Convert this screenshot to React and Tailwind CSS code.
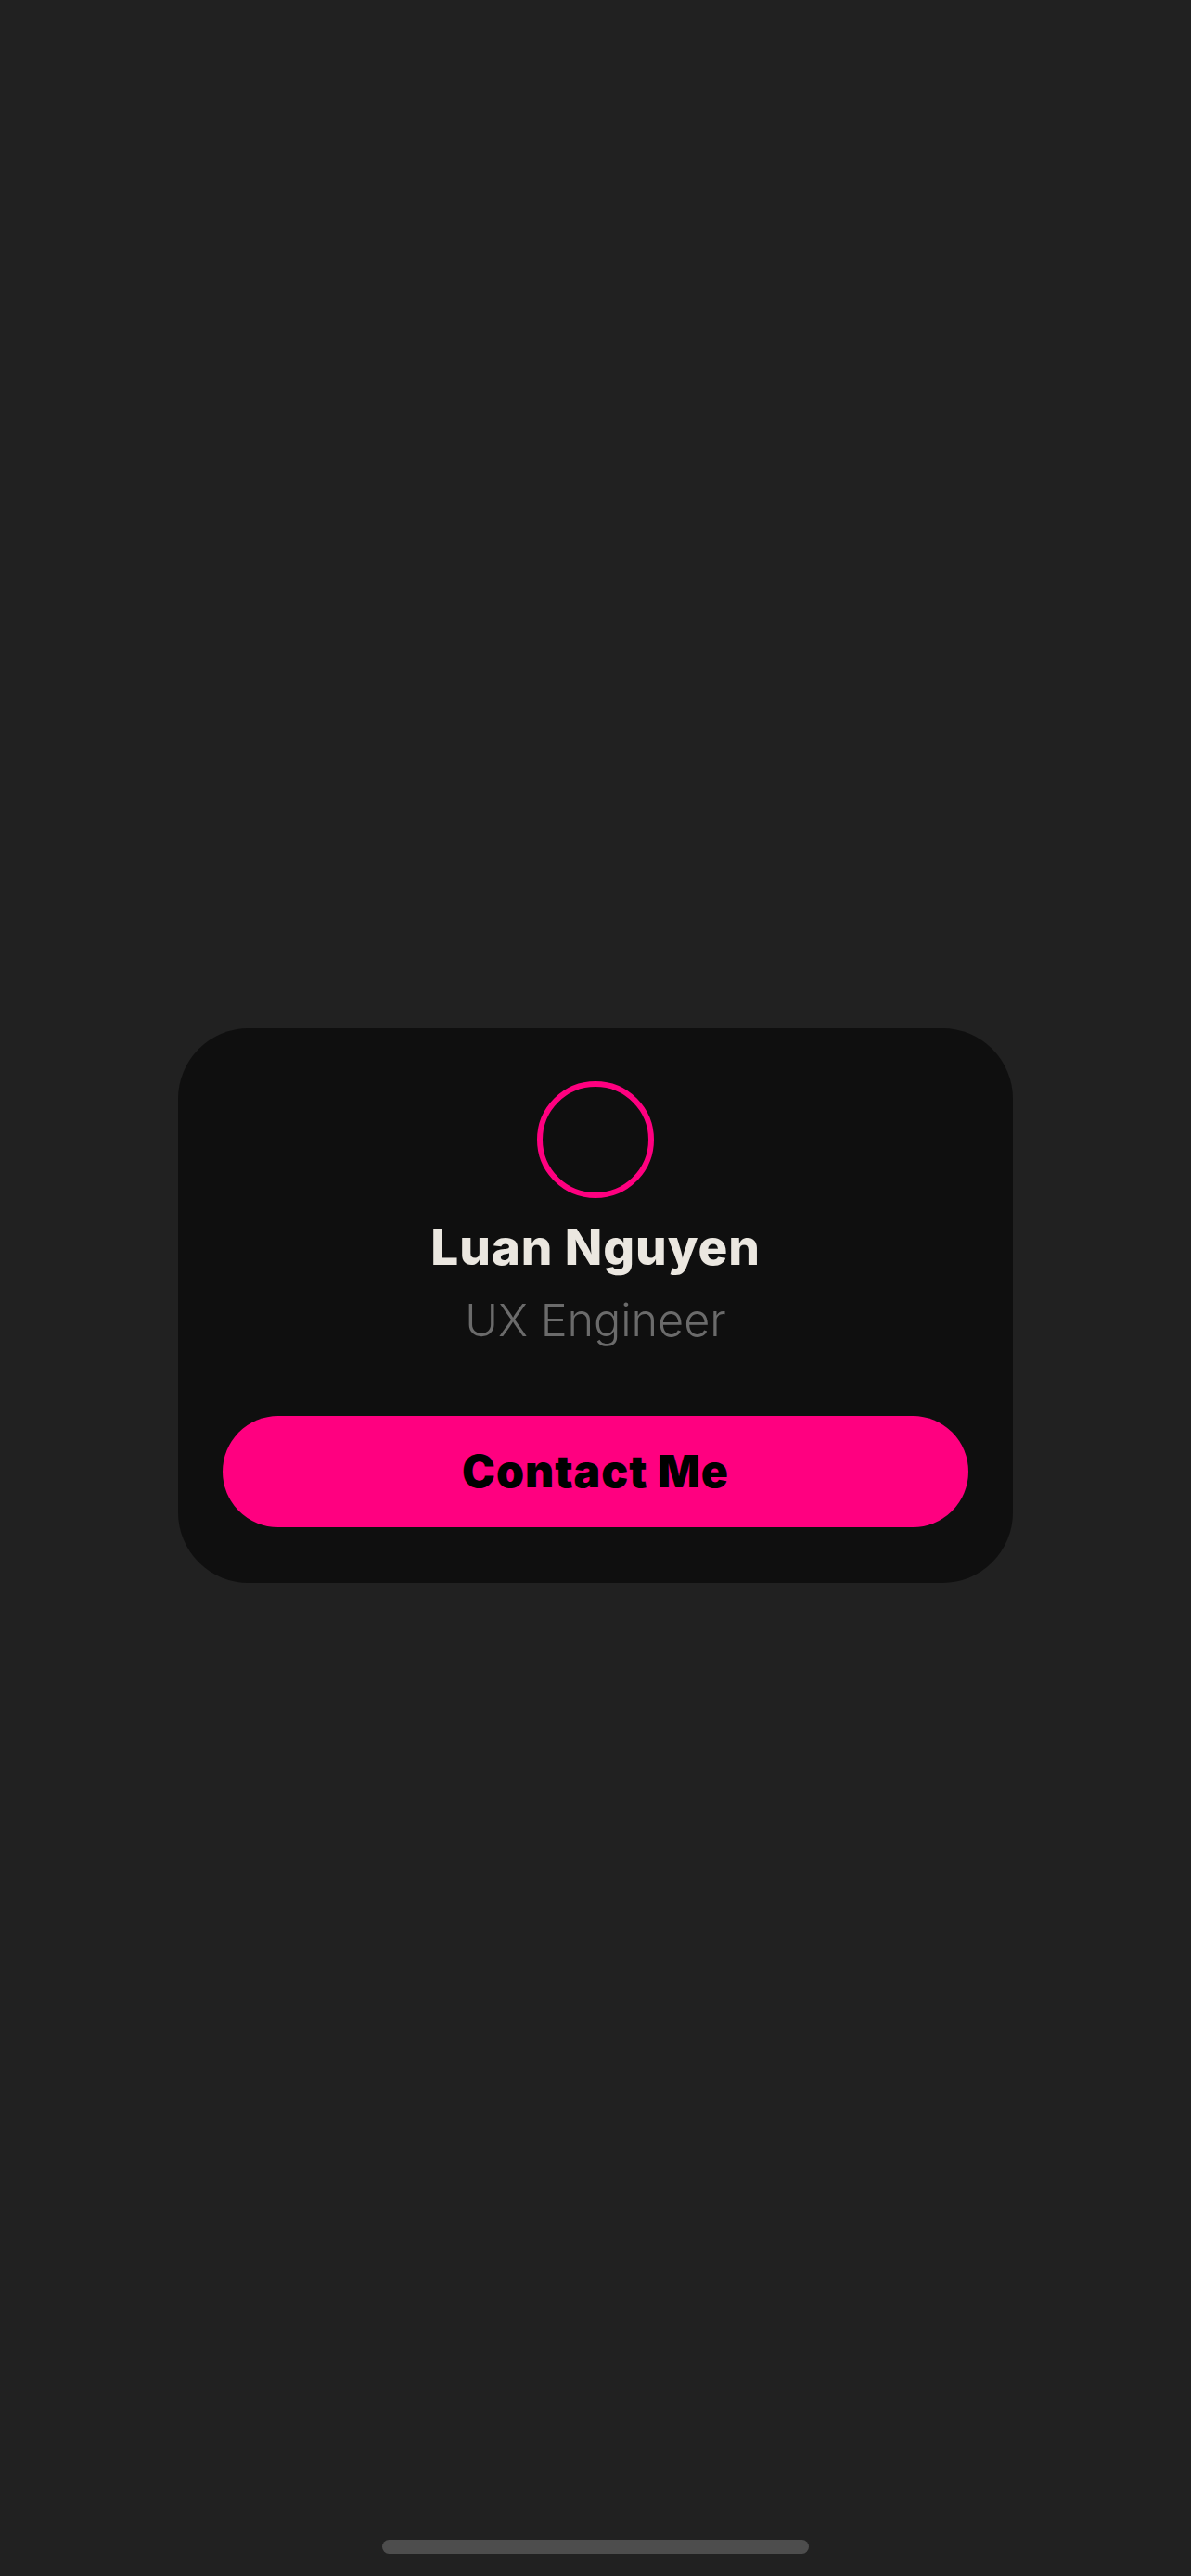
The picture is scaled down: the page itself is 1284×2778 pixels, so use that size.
export default function App() {
  return (
    <div
      className="w-[1284px] h-[2778px] bg-[#212121] flex flex-col items-center overflow-hidden"
      style={{ fontFamily: 'Inter, "Noto Sans", sans-serif' }}
    >
      <div className="mt-[1109px] w-[900px] bg-[#0f0f0f] rounded-[76px] flex flex-col items-center pt-[57px] pb-[60px] px-[48px]">
        <div className="w-[126px] h-[126px] rounded-full border-[6px] border-[#ff0080]" />
        <div className="mt-[27px] text-[53px] leading-none font-extrabold text-[#ebe7e0] tracking-[0.9px]">
          Luan Nguyen
        </div>
        <div className="mt-[28px] text-[48.5px] leading-none font-light text-[#6b6b6b]">
          UX Engineer
        </div>
        <button className="mt-[78px] w-full h-[120px] rounded-full bg-[#ff0080] flex items-center justify-center text-[48px] leading-none font-black text-black tracking-[1px]">
          Contact Me
        </button>
      </div>
      <div className="flex-1" />
      <div className="mb-[24px] w-[460px] h-[15px] rounded-full bg-[#4d4d4d]" />
    </div>
  );
}
